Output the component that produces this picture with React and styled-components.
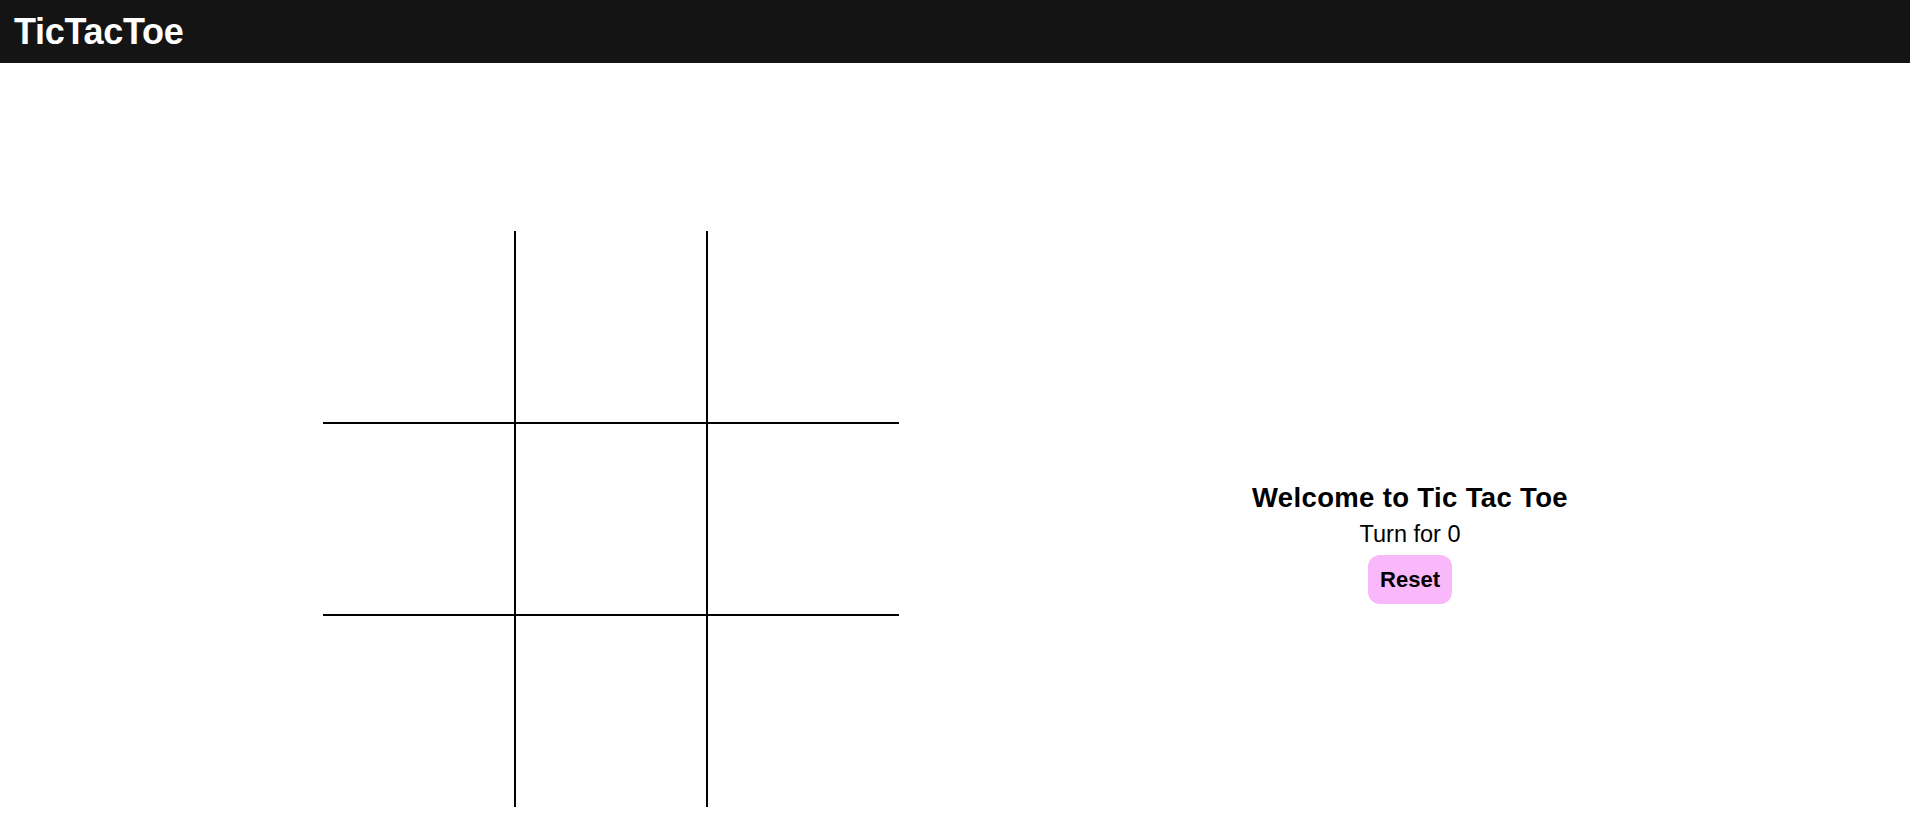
import styled, { createGlobalStyle } from "styled-components";

const GlobalStyle = createGlobalStyle`
  * {
    box-sizing: border-box;
  }
  body {
    margin: 0;
    background: #fff;
    font-family: "Liberation Sans", Arial, sans-serif;
    color: #000;
  }
`;

const Navbar = styled.header`
  height: 63px;
  background: #141414;
  display: flex;
  align-items: center;
  padding-left: 14px;
`;

const Brand = styled.h1`
  margin: 0;
  color: #fff;
  font-size: 36px;
  font-weight: 700;
  letter-spacing: -0.3px;
  line-height: 1;
`;

const Main = styled.main`
  display: flex;
  align-items: flex-start;
  padding: 168px 0 0 323px;
`;

const Board = styled.div`
  display: grid;
  grid-template-columns: 193px 192px 191px;
  grid-template-rows: 193px 192px 191px;
`;

const Cell = styled.div`
  border-right: ${(p) => (p.$col < 2 ? "2px solid #000" : "none")};
  border-bottom: ${(p) => (p.$row < 2 ? "2px solid #000" : "none")};
  display: flex;
  align-items: center;
  justify-content: center;
  font-size: 96px;
`;

const Info = styled.section`
  margin: 252px 0 0 351px;
  width: 320px;
  display: flex;
  flex-direction: column;
  align-items: center;
`;

const Title = styled.h2`
  margin: 0;
  font-size: 27.5px;
  line-height: 30px;
  font-weight: 700;
  letter-spacing: 0.35px;
  white-space: nowrap;
`;

const Turn = styled.div`
  margin-top: 6px;
  font-size: 23.5px;
  line-height: 30px;
`;

const ResetButton = styled.button`
  margin-top: 6px;
  height: 49px;
  padding: 0 12px;
  border: none;
  border-radius: 12px;
  background: #f9b8f9;
  font-family: inherit;
  font-size: 22px;
  font-weight: 700;
  color: #000;
  cursor: pointer;
`;

const cells = Array.from({ length: 9 }, (_, i) => ({ row: Math.floor(i / 3), col: i % 3 }));

export default function App() {
  return (
    <>
      <GlobalStyle />
      <Navbar>
        <Brand>TicTacToe</Brand>
      </Navbar>
      <Main>
        <Board>
          {cells.map((c, i) => (
            <Cell key={i} $row={c.row} $col={c.col} />
          ))}
        </Board>
        <Info>
          <Title>Welcome to Tic Tac Toe</Title>
          <Turn>Turn for 0</Turn>
          <ResetButton>Reset</ResetButton>
        </Info>
      </Main>
    </>
  );
}
